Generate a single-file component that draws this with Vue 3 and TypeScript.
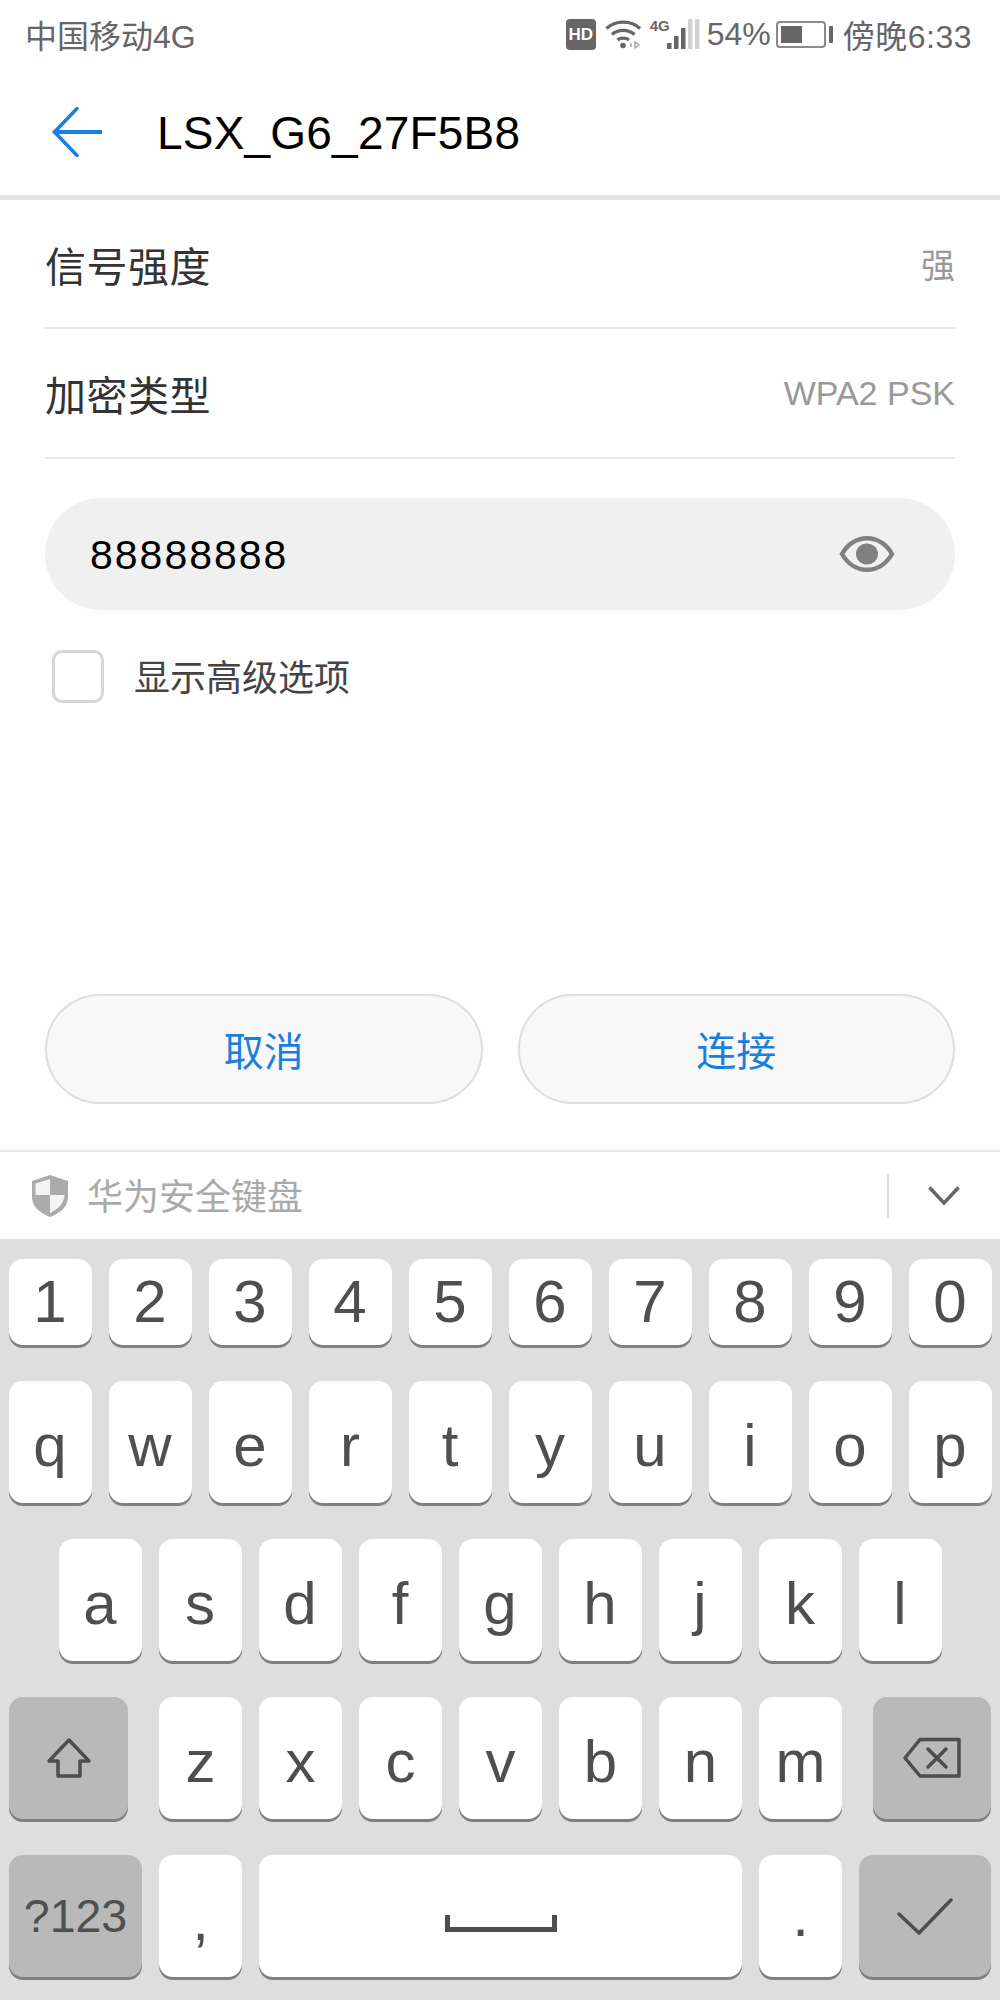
<script setup lang="ts">
import { ref } from "vue";

const password = ref("88888888");

const rows = [
  { label: "信号强度", value: "强" },
  { label: "加密类型", value: "WPA2 PSK" },
];

const digits = "1234567890".split("");
const topLetters = "qwertyuiop".split("");
const midLetters = "asdfghjkl".split("");
const lowLetters = "zxcvbnm".split("");
const signalBars = [
  { x: 0, h: 6, on: true },
  { x: 7, h: 13, on: true },
  { x: 14, h: 21, on: true },
  { x: 21, h: 30, on: false },
  { x: 28, h: 30, on: false },
];
</script>

<template>
  <div class="page">
    <div class="status">
      <span class="carrier">中国移动4G</span>
      <div class="status-right">
        <span class="hd">HD</span>
        <svg class="wifi" viewBox="0 0 37 30" fill="none" stroke="#666" stroke-width="3.4">
          <path d="M1.5 9.5C10.500 1 26 1 35 9.500" />
          <path d="M7 15.500C13 10 23 10 29.500 15.500" />
          <path d="M12.500 21C15.500 18.500 21 18.500 24 21" />
          <circle cx="18" cy="26.500" r="2.800" fill="#666" stroke="none" />
          <path d="M26 28V24M30 29l4-3-4-3z" stroke="#aaa" stroke-width="1.500" />
        </svg>
        <span class="net">4G</span>
        <svg class="signal" viewBox="0 0 33 30">
          <rect
            v-for="bar in signalBars"
            :key="bar.x"
            :x="bar.x"
            :y="30 - bar.h"
            width="4.500"
            :height="bar.h"
            :fill="bar.on ? '#666' : '#d2d2d2'"
          />
        </svg>
        <span class="percent">54%</span>
        <div class="battery">
          <div class="battery-body"><div class="battery-fill"></div></div>
          <div class="battery-cap"></div>
        </div>
        <span class="clock">傍晚6:33</span>
      </div>
    </div>

    <div class="header">
      <svg class="back" viewBox="0 0 50 50" fill="none" stroke="#1a7fe0" stroke-width="3.500">
        <path d="M25 1.500 2.500 25 25 48.500" stroke-linecap="round" stroke-linejoin="round" />
        <path d="M2.500 25H49" stroke-linecap="round" stroke-width="4" />
      </svg>
      <h1 class="title">LSX_G6_27F5B8</h1>
    </div>

    <div class="content">
      <div v-for="row in rows" :key="row.label" class="info-row">
        <span class="info-label">{{ row.label }}</span>
        <span class="info-value">{{ row.value }}</span>
      </div>

      <div class="password">
        <span class="password-text">{{ password }}</span>
        <svg class="eye" viewBox="0 0 56 38" fill="none">
          <path d="M3 19C15 -2 41 -2 53 19C41 40 15 40 3 19Z" stroke="#808080" stroke-width="4.500" />
          <ellipse cx="28" cy="19" rx="11" ry="10.500" fill="#808080" />
        </svg>
      </div>

      <div class="advanced">
        <div class="checkbox"></div>
        <span class="advanced-text">显示高级选项</span>
      </div>
    </div>

    <div class="actions">
      <button class="action">取消</button>
      <button class="action">连接</button>
    </div>

    <div class="secure-bar">
      <svg class="shield" viewBox="0 0 36 42">
        <path d="M18 0 36 6V22C36 32 28 38 18 42C8 38 0 32 0 22V6Z" fill="#ababab" />
        <path d="M18 4V20H3.500V8.500ZM18 20H32.500C32 29 26 34 18 38Z" fill="#f4f4f4" />
      </svg>
      <span class="secure-text">华为安全键盘</span>
      <div class="secure-sep"></div>
      <svg class="chevron" viewBox="0 0 32 19" fill="none" stroke="#666" stroke-width="3.500">
        <path d="M1.500 1.500 16 17 30.500 1.500" />
      </svg>
    </div>

    <div class="keyboard">
      <div class="key-row digit-row">
        <div v-for="k in digits" :key="k" class="key">{{ k }}</div>
      </div>
      <div class="key-row">
        <div v-for="k in topLetters" :key="k" class="key letter">{{ k }}</div>
      </div>
      <div class="key-row">
        <div v-for="k in midLetters" :key="k" class="key letter">{{ k }}</div>
      </div>
      <div class="key-row">
        <div class="key dark shift">
          <svg width="46" height="42" viewBox="0 0 46 42" fill="none" stroke="#4d4d4d" stroke-width="3.500">
            <path d="M23 3 43 24H34V39H12V24H3Z" stroke-linejoin="round" />
          </svg>
        </div>
        <div v-for="k in lowLetters" :key="k" class="key letter">{{ k }}</div>
        <div class="key dark del">
          <svg width="58" height="42" viewBox="0 0 58 42" fill="none" stroke="#4d4d4d" stroke-width="3.500">
            <path d="M17 2.500H56V39H17L2 21Z" stroke-linejoin="round" />
            <path d="M25 12 43 30M43 12 25 30" stroke-linecap="round" />
          </svg>
        </div>
      </div>
      <div class="key-row">
        <div class="key dark symbols">?123</div>
        <div class="key letter">,</div>
        <div class="key space">
          <svg width="112" height="17" viewBox="0 0 112 17" fill="none" stroke="#4d4d4d" stroke-width="5">
            <path d="M2.500 0V14.500H109.500V0" />
          </svg>
        </div>
        <div class="key">.</div>
        <div class="key dark done">
          <svg width="56" height="38" viewBox="0 0 56 38" fill="none" stroke="#4d4d4d" stroke-width="3.500">
            <path d="M2 17 22 36 54 3" stroke-linecap="round" stroke-linejoin="round" />
          </svg>
        </div>
      </div>
    </div>
  </div>
</template>

<style scoped>
.page {
  width: 1000px;
  height: 2000px;
  display: flex;
  flex-direction: column;
  background: #fefefe;
  font-family: "Liberation Sans", "Noto Sans CJK SC", sans-serif;
  overflow: hidden;
}

.status {
  height: 68px;
  flex: none;
  padding: 0 28px 0 25px;
  display: flex;
  align-items: center;
  justify-content: space-between;
  color: #666;
  font-size: 32px;
}

.status-right {
  display: flex;
  align-items: center;
}

.hd {
  width: 30px;
  height: 31px;
  margin-right: 9px;
  background: #666;
  border-radius: 4px;
  color: #fff;
  font-size: 17px;
  font-weight: 700;
  line-height: 31px;
  text-align: center;
}

.wifi {
  width: 37px;
  height: 30px;
  margin-right: 8px;
}

.net {
  width: 17px;
  margin-top: -16px;
  font-size: 15px;
  font-weight: 700;
  line-height: 16px;
}

.signal {
  width: 33px;
  height: 30px;
  margin-right: 7px;
}

.percent {
  width: 60px;
  margin-right: 9px;
}

.battery {
  display: flex;
  align-items: center;
  margin-right: 10px;
}

.battery-body {
  width: 50px;
  height: 27px;
  padding: 3px;
  border: 2px solid #8a8a8a;
  border-radius: 4px;
  box-sizing: border-box;
}

.battery-fill {
  width: 54%;
  height: 100%;
  background: #666;
}

.battery-cap {
  width: 4px;
  height: 17px;
  margin-left: 3px;
  background: #666;
  border-radius: 1px;
}

.clock {
  letter-spacing: 0.5px;
}

.header {
  height: 127px;
  flex: none;
  padding-left: 52px;
  display: flex;
  align-items: center;
  gap: 55px;
  border-bottom: 5px solid #e3e3e3;
}

.back {
  width: 50px;
  height: 50px;
  flex: none;
}

.title {
  margin: 3px 0 0;
  color: #000;
  font-size: 46px;
  font-weight: 400;
  letter-spacing: 0.2px;
}

.content {
  height: 794px;
  flex: none;
  padding: 0 45px;
  box-sizing: border-box;
}

.info-row {
  height: 130px;
  display: flex;
  align-items: center;
  justify-content: space-between;
  border-bottom: 2px solid #e6e6e6;
  box-sizing: border-box;
}

.info-row:first-child {
  height: 129px;
}

.info-label {
  color: #333;
  font-size: 41px;
  letter-spacing: 0.5px;
}

.info-value {
  color: #999;
  font-size: 34px;
}

.password {
  height: 112px;
  margin-top: 39px;
  padding: 0 60px 0 45px;
  display: flex;
  align-items: center;
  justify-content: space-between;
  background: #f0f0f0;
  border-radius: 56px;
}

.password-text {
  margin-top: 3px;
  color: #000;
  font-size: 41px;
  letter-spacing: 2px;
}

.eye {
  width: 56px;
  height: 38px;
  overflow: visible;
}

.advanced {
  margin-top: 40px;
  padding-left: 7px;
  display: flex;
  align-items: center;
  gap: 30px;
}

.checkbox {
  width: 52px;
  height: 53px;
  background: #fff;
  border: 3px solid #d6d6d6;
  border-radius: 10px;
  box-sizing: border-box;
}

.advanced-text {
  margin-top: -4px;
  color: #444;
  font-size: 36px;
}

.actions {
  flex: none;
  padding: 0 45px;
  display: flex;
  gap: 35px;
}

.action {
  flex: 1;
  height: 110px;
  padding: 0;
  background: #f8f8f8;
  border: 2px solid #dedede;
  border-radius: 55px;
  color: #1a7fdc;
  font-family: inherit;
  font-size: 40px;
}

.secure-bar {
  height: 87px;
  flex: none;
  margin-top: 46px;
  padding: 0 40px 0 32px;
  display: flex;
  align-items: center;
  border-top: 2px solid #e6e6e6;
}

.shield {
  width: 36px;
  height: 42px;
  margin-right: 19px;
}

.secure-text {
  margin-top: -3px;
  color: #aaa;
  font-size: 36px;
}

.secure-sep {
  width: 2px;
  height: 44px;
  margin-left: auto;
  margin-right: 39px;
  background: #e0e0e0;
}

.chevron {
  width: 32px;
  height: 19px;
}

.keyboard {
  flex: 1;
  padding-top: 20px;
  display: flex;
  flex-direction: column;
  gap: 36px;
  background: #dedede;
}

.key-row {
  display: flex;
  justify-content: center;
  gap: 17px;
}

.key {
  width: 83px;
  height: 122px;
  flex: none;
  display: flex;
  align-items: center;
  justify-content: center;
  background: #fff;
  border-radius: 14px;
  box-shadow: 0 3px 0 #808080;
  color: #4f4f4f;
  font-size: 60px;
  line-height: 1;
}

.digit-row .key {
  height: 86px;
}

.letter {
  padding-top: 7px;
  box-sizing: border-box;
}

.dark {
  background: #b9b9b9;
}

.shift {
  width: 119px;
  margin-right: 14px;
}

.del {
  width: 118px;
  margin-left: 14px;
}

.symbols {
  width: 133px;
  font-size: 46.5px;
}

.space {
  width: 483px;
  padding-top: 14px;
  box-sizing: border-box;
}

.done {
  width: 132px;
}
</style>

<style>
html,
body {
  margin: 0;
  background: #fefefe;
}
</style>
